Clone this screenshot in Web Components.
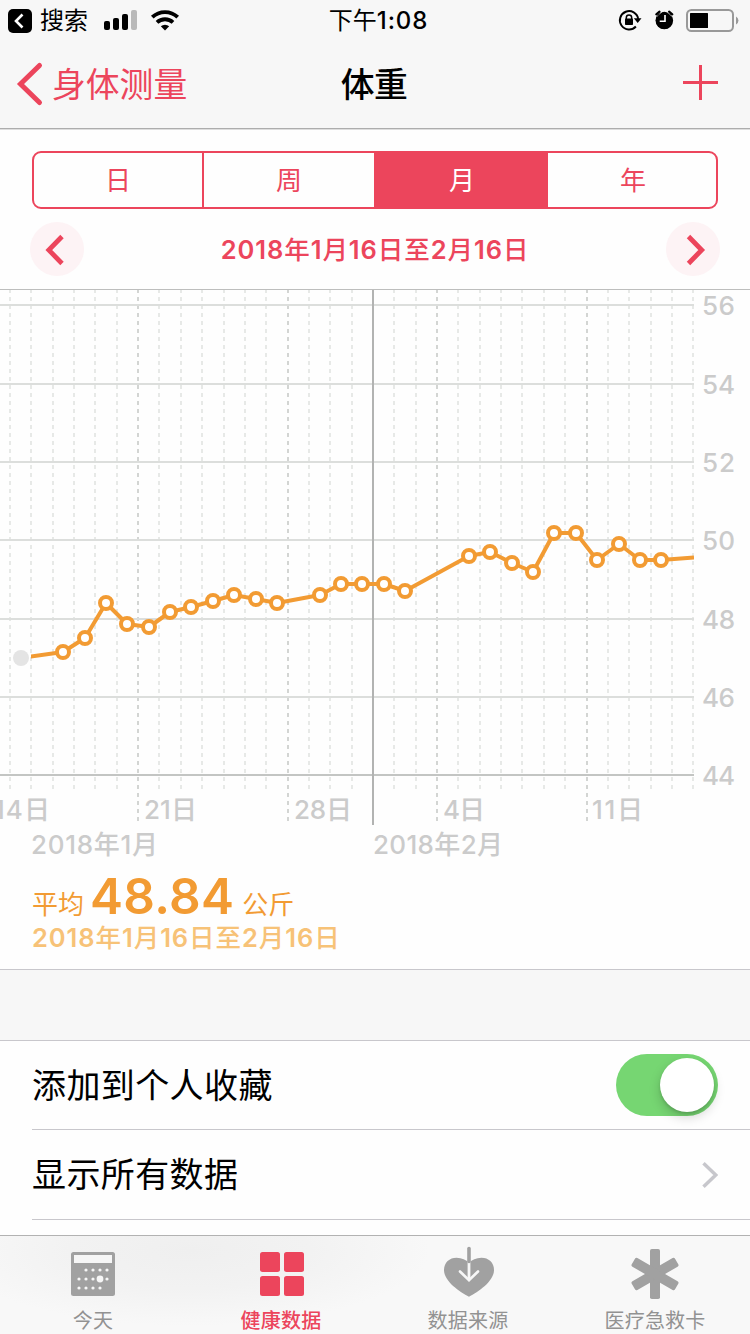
<!DOCTYPE html>
<html lang="zh-CN">
<head>
<meta charset="utf-8">
<title>体重</title>
<style>
html, body {
    margin: 0;
    height: 100%;
}
body {
    --accent: #ec455c;
    --orange: #f29b33;
    --line: #c8c7cc;
    --bar: #f7f7f7;
    font-family: Inter, "Noto Sans CJK SC", sans-serif;
    color: #000;
    overflow: hidden;
}
</style>
</head>
<body>
<health-app></health-app>
<script>
class BaseElement extends HTMLElement {
    connectedCallback() {
        if (this.shadowRoot) return;
        this.attachShadow({mode: "open"}).innerHTML = this.template();
    }
}

customElements.define("status-bar", class extends BaseElement {
    template() {
        return `
<style>
:host {
    display: grid;
    grid-template-columns: 1fr auto 1fr;
    height: 40px;
    font-size: 24px;
    line-height: 42px;
}
.left, .right { display: flex; }
.right { justify-content: flex-end; }
.back { margin-left: 40px; width: 64px; }
.time { font-weight: 500; letter-spacing: 0.9px; padding-left: 7px; }
.time span { font-weight: 400; letter-spacing: 0; }
svg { display: block; }
.left svg:first-child { margin-right: -32px; }
</style>
<div class="left">
    <svg width="32" height="40" viewBox="0 0 32 40">
        <rect x="8" y="9" width="24" height="24" rx="5"/>
        <path d="M22.5 14.5 16 21l6.500 6.500" fill="none" stroke="#fff" stroke-width="2.600"/>
    </svg>
    <span class="back">搜索</span>
    <svg width="80" height="40" viewBox="104 0 80 40">
        <rect x="104" y="21" width="6" height="9" rx="2"/>
        <rect x="113" y="18" width="6" height="12" rx="2"/>
        <rect x="122" y="14" width="6" height="16" rx="2"/>
        <rect x="131" y="10" width="6" height="20" rx="2" fill="#b9b9b9"/>
        <g fill="none" stroke="#000" stroke-width="3.800">
            <path d="M152.300 17.200a18.300 18.300 0 0 1 25.400 0"/>
            <path d="M157 22.400a11.700 11.700 0 0 1 16 0"/>
        </g>
        <path d="M160.800 26.300a6.300 6.300 0 0 1 8.400 0L165 30.500z"/>
    </svg>
</div>
<div class="time"><span>下午</span>1:08</div>
<div class="right">
    <svg width="136" height="40" viewBox="614 0 136 40">
        <g fill="none" stroke="#000" stroke-width="1.900">
            <path d="M635.900 26.500a9.200 9.200 0 1 1 2.300-7.500"/>
            <path d="M626.300 20v-2.300a2.700 2.700 0 0 1 5.400 0V20" stroke-width="1.500"/>
        </g>
        <path d="M633.800 18.300h7.700l-3.800 4.800z"/>
        <rect x="625" y="18.600" width="8" height="6.400" rx=".8"/>
        <circle cx="664.300" cy="20.500" r="8.800"/>
        <path d="M656.300 14.300l3.200-2.600M672.300 14.300l-3.200-2.600" fill="none" stroke="#000" stroke-width="2.200" stroke-linecap="round"/>
        <path d="M657.200 16.600l4.600-4.200M671.400 16.600l-4.600-4.200" fill="none" stroke="#f7f7f7" stroke-width="1"/>
        <circle cx="664.300" cy="20.700" r="8.200"/>
        <path d="M665 15v6.300h-5.300" fill="none" stroke="#fff" stroke-width="1.600"/>
        <rect x="687" y="10" width="46" height="21" rx="4.500" fill="none" stroke="#999" stroke-width="2"/>
        <rect x="690" y="13" width="18" height="15" rx=".5"/>
        <path d="M736 16.500a4.500 4.500 0 0 1 0 8z" fill="#999"/>
    </svg>
</div>
`;
    }
});

customElements.define("nav-bar", class extends BaseElement {
    template() {
        return `
<style>
:host {
    display: grid;
    grid-template-columns: 1fr auto 1fr;
    height: 88px;
    font-size: 33.800px;
    line-height: 90px;
}
.back { display: flex; color: var(--accent); }
.title { font-weight: 500; letter-spacing: -.5px; padding-right: 2px; }
.add { justify-self: end; }
svg { display: block; }
</style>
<div class="back">
    <svg width="52" height="88" viewBox="0 40 52 88">
        <path d="M39.500 65.500 20.500 84l19 18.500" fill="none" stroke="#ec455c" stroke-width="5" stroke-linecap="round" stroke-linejoin="miter"/>
    </svg>
    <slot name="back"></slot>
</div>
<div class="title"><slot></slot></div>
<svg class="add" width="67" height="88" viewBox="683 40 67 88">
    <path d="M700.500 65v35M683 82.500h35" stroke="#ec455c" stroke-width="3"/>
</svg>
`;
    }
});

customElements.define("segmented-control", class extends BaseElement {
    template() {
        const selected = this.getAttribute("selected");
        const items = this.getAttribute("items").split(",");
        return `
<style>
:host {
    display: grid;
    grid-template-columns: 168px 172px 174px 1fr;
    height: 54px;
    margin: 22px 32px 0;
    border: 2px solid var(--accent);
    border-radius: 9px;
    overflow: hidden;
    color: var(--accent);
    font-size: 26px;
    line-height: 56px;
    text-align: center;
}
div + div { border-left: 2px solid var(--accent); }
.on { background: var(--accent); color: #fff; }
.on + div { border-left: 0; padding-left: 2px; }
</style>
${items.map(i => `<div class="${i === selected ? "on" : ""}">${i}</div>`).join("")}
`;
    }
});

// the digits are set one weight heavier than the characters between them
customElements.define("date-range", class extends BaseElement {
    template() {
        return `
<style>
:host {
    display: block;
    font-size: 25.500px;
    letter-spacing: .93px;
    white-space: nowrap;
}
b { font-weight: 600; }
</style>
${this.getAttribute("text").replace(/\d+/g, "<b>$&</b>")}
`;
    }
});

customElements.define("date-pager", class extends BaseElement {
    template() {
        return `
<style>
:host {
    display: flex;
    justify-content: space-between;
    align-items: center;
    height: 80px;
    padding: 0 30px;
    color: var(--accent);
    font-weight: 500;
}
.btn {
    width: 54px;
    height: 54px;
    border-radius: 50%;
    background: #fdf3f5;
}
.date { padding-bottom: 4px; }
path { fill: none; stroke: #ec455c; stroke-width: 4.800; }
</style>
<svg class="btn" viewBox="30 222 54 54"><path d="M62 236.500 48.800 250 62 263.500"/></svg>
<div class="date"><slot></slot></div>
<svg class="btn" viewBox="666 222 54 54"><path d="M688.500 236.500 701.700 250 688.500 263.500"/></svg>
`;
    }
});

customElements.define("weight-chart", class extends BaseElement {
    get #points() {
        return [
            [63, 652], [85, 638], [106, 603], [127, 624], [149, 627], [170, 612], [191, 607],
            [213, 601], [234, 595], [256, 599], [277, 603], [320, 595], [341, 584], [362, 584],
            [384, 584], [405, 591], [469, 556], [490, 552], [512, 563], [533, 572], [554, 533],
            [576, 533], [597, 560], [619, 544], [640, 560], [661, 560]
        ];
    }

    #days() {
        let out = "";
        for (let i = 0; i <= 32; i++) {
            if (i === 17) continue;
            const x = Math.round(10 + i * 21.35);
            const week = i % 7 === 6;
            out += `<path class="${week ? "week" : "day"}" d="M${i === 27 ? 587 : x} 289V${week ? 822 : 790}"/>`;
        }
        return out;
    }

    #scale() {
        const rows = [305, 384, 462, 540, 619, 697, 775];
        return rows.map((y, i) => `
<path class="${i === 6 ? "axis" : "row"}" d="M0 ${y}H694"/>
<text x="702" y="${y + 10}" textLength="33">${56 - i * 2}</text>`).join("");
    }

    template() {
        const line = [[21, 658], ...this.#points, [694, 557.5]].map(p => p.join(" ")).join("L");
        return `
<style>
:host { display: block; height: 577px; }
svg { display: block; }
path { fill: none; stroke-width: 2; }
.day { stroke: #e7e9e7; stroke-dasharray: 4; }
.week { stroke: #d3d5d3; stroke-dasharray: 4; }
.row { stroke: #dcdedc; }
.axis { stroke: #c3c5c3; }
.line { stroke: #f29b33; stroke-width: 4; stroke-linejoin: round; }
.dots circle { fill: #fff; stroke: #f29b33; stroke-width: 4; }
text { fill: #cbcbcb; font-size: 26px; font-weight: 500; }
</style>
<svg width="750" height="577" viewBox="0 289 750 577">
    ${this.#days()}
    ${this.#scale()}
    <path d="M373 290V825" stroke="#b2b3b2"/>
    <path d="M0 289.500H750" stroke="#bdbebd" style="stroke-width: 1"/>
    <clipPath id="plot"><rect x="31" y="289" width="663" height="500"/></clipPath>
    <path class="line" clip-path="url(#plot)" d="M${line}"/>
    <g class="dots">${this.#points.map(([x, y]) => `<circle cx="${x}" cy="${y}" r="6"/>`).join("")}</g>
    <circle cx="21" cy="658" r="8" fill="#e4e4e4"/>
    <text x="-6" y="819" textLength="56">14日</text>
    <text x="144" y="819" textLength="53">21日</text>
    <text x="294" y="819" textLength="58">28日</text>
    <text x="443" y="819" textLength="42">4日</text>
    <text x="592" y="819" textLength="51">11日</text>
    <text x="31" y="854" textLength="127">2018年1月</text>
    <text x="373" y="854" textLength="130">2018年2月</text>
</svg>
`;
    }
});

customElements.define("weight-summary", class extends BaseElement {
    template() {
        return `
<style>
:host {
    display: block;
    height: 103px;
    padding-left: 32px;
    border-bottom: 1px solid var(--line);
    color: var(--orange);
    font-size: 26px;
}
.value {
    display: flex;
    align-items: baseline;
    height: 54px;
    line-height: 61px;
}
.value b { font-size: 49.500px; font-weight: 600; letter-spacing: .3px; margin: 0 8px 0 6px; }
.range { line-height: 36px; color: #f7c277; font-weight: 500; }
</style>
<div class="value"><slot name="label"></slot><b><slot name="value"></slot></b><slot name="unit"></slot></div>
<div class="range"><slot></slot></div>
`;
    }
});

customElements.define("list-row", class extends BaseElement {
    template() {
        return `
<style>
:host {
    display: flex;
    align-items: center;
    justify-content: space-between;
    margin-left: 32px;
    padding-right: 32px;
    height: 89px;
    border-bottom: 1px solid var(--line);
    font-size: 34px;
    letter-spacing: .4px;
}
:host([first]) { height: 88px; }
span { padding-bottom: 4px; }
</style>
<span><slot></slot></span>
<slot name="accessory"></slot>
`;
    }
});

customElements.define("toggle-switch", class extends BaseElement {
    template() {
        return `
<style>
:host {
    display: flex;
    justify-content: flex-end;
    box-sizing: border-box;
    width: 102px;
    height: 62px;
    padding: 4px;
    border-radius: 31px;
    background: #76d672;
}
div {
    width: 54px;
    height: 54px;
    border-radius: 50%;
    background: #fff;
    box-shadow: 0 5px 12px rgba(0, 0, 0, .18), 0 2px 3px rgba(0, 0, 0, .12);
}
</style>
<div></div>
`;
    }
});

customElements.define("row-chevron", class extends BaseElement {
    template() {
        return `
<style>
:host { display: block; }
svg { display: block; }
</style>
<svg width="18" height="28" viewBox="700 1161 18 28">
    <path d="M703.500 1163.300 715.800 1175l-12.300 11.700" fill="none" stroke="#c7c7cc" stroke-width="3.500"/>
</svg>
`;
    }
});

const dots = [
    [86, 1270], [93, 1270], [100, 1270], [107, 1270],
    [79, 1279], [86, 1279], [93, 1279], [107, 1279],
    [79, 1288], [86, 1288], [93, 1288], [100, 1288]
];

const icons = {
    today: `<svg viewBox="67 1246 52 56">
        <rect x="71" y="1252" width="44" height="44" rx="2.500" fill="#a1a1a1"/>
        <path d="M74 1255h38v8H74z" fill="#f6f6f6"/>
        <g fill="#f6f6f6">${dots.map(([x, y]) => `<circle cx="${x}" cy="${y}" r="1.600"/>`).join("")}
        <circle cx="100" cy="1279" r="3.400"/></g>
    </svg>`,
    data: `<svg viewBox="255 1246 52 56" fill="#ec455c">
        <rect x="260" y="1252" width="20" height="20" rx="2.500"/>
        <rect x="284" y="1252" width="20" height="20" rx="2.500"/>
        <rect x="260" y="1276" width="20" height="20" rx="2.500"/>
        <rect x="284" y="1276" width="20" height="20" rx="2.500"/>
    </svg>`,
    sources: `<svg viewBox="442 1246 52 56" fill="none">
        <path d="M469 1296.800C460 1292 444 1281.500 444 1270C444 1262.500 449.500 1257.700 456.500 1257.700C462 1257.700 466 1260 469 1262.500C472 1260 476 1257.700 481.500 1257.700C488.500 1257.700 494 1262.500 494 1270C494 1281.500 478 1292 469 1296.800Z" fill="#a1a1a1"/>
        <path d="M469 1258v22" stroke="#f7f7f7" stroke-width="2.800"/>
        <path d="M460 1271.500l9 8.800 9-8.800" stroke="#f7f7f7" stroke-width="2.600" stroke-linecap="round"/>
        <path d="M469 1248.500v13" stroke="#a1a1a1" stroke-width="3.600" stroke-linecap="round"/>
    </svg>`,
    medical: `<svg viewBox="629 1246 52 56" fill="#a1a1a1">
        ${[0, 60, 120].map(a => `<rect x="650" y="1249" width="10" height="50" rx="1.800" transform="rotate(${a} 655 1274)"/>`).join("")}
    </svg>`
};

customElements.define("tab-item", class extends BaseElement {
    template() {
        return `
<style>
:host {
    display: flex;
    flex-direction: column;
    align-items: center;
    padding-top: 10px;
    color: #929292;
    font-size: 20px;
    line-height: 38px;
    letter-spacing: .2px;
}
:host([active]) { color: var(--accent); font-weight: 500; }
svg { width: 52px; height: 56px; display: block; }
</style>
${icons[this.getAttribute("icon")]}
<span><slot></slot></span>
`;
    }
});

customElements.define("tab-bar", class extends BaseElement {
    template() {
        return `
<style>
:host {
    display: grid;
    grid-template-columns: 186px 190px 184px 190px;
    height: 98px;
    border-top: 1px solid #b2b2b2;
    background: radial-gradient(ellipse 240px 75px at 190px 15px, #efefef, #f2f2f2 50%, #f8f8f8);
}
</style>
<slot></slot>
`;
    }
});

customElements.define("health-app", class extends BaseElement {
    template() {
        return `
<style>
:host {
    display: flex;
    flex-direction: column;
    width: 750px;
    height: 1334px;
    background: #fefefe;
    overflow: hidden;
}
header {
    background: var(--bar);
    border-bottom: 1px solid #adadad;
    box-shadow: 0 1px 0 #dedede;
}
.gap { height: 70px; background: var(--bar); border-bottom: 1px solid var(--line); }
main { height: 1106px; overflow: hidden; }
</style>
<header>
    <status-bar></status-bar>
    <nav-bar><span slot="back">身体测量</span>体重</nav-bar>
</header>
<main>
    <segmented-control items="日,周,月,年" selected="月"></segmented-control>
    <date-pager><date-range text="2018年1月16日至2月16日"></date-range></date-pager>
    <weight-chart></weight-chart>
    <weight-summary>
        <span slot="label">平均</span>
        <span slot="value">48.84</span>
        <span slot="unit">公斤</span>
        <date-range text="2018年1月16日至2月16日"></date-range>
    </weight-summary>
    <div class="gap"></div>
    <list-row first>添加到个人收藏<toggle-switch slot="accessory"></toggle-switch></list-row>
    <list-row>显示所有数据<row-chevron slot="accessory"></row-chevron></list-row>
</main>
<tab-bar>
    <tab-item icon="today">今天</tab-item>
    <tab-item icon="data" active>健康数据</tab-item>
    <tab-item icon="sources">数据来源</tab-item>
    <tab-item icon="medical">医疗急救卡</tab-item>
</tab-bar>
`;
    }
});
</script>
</body>
</html>
